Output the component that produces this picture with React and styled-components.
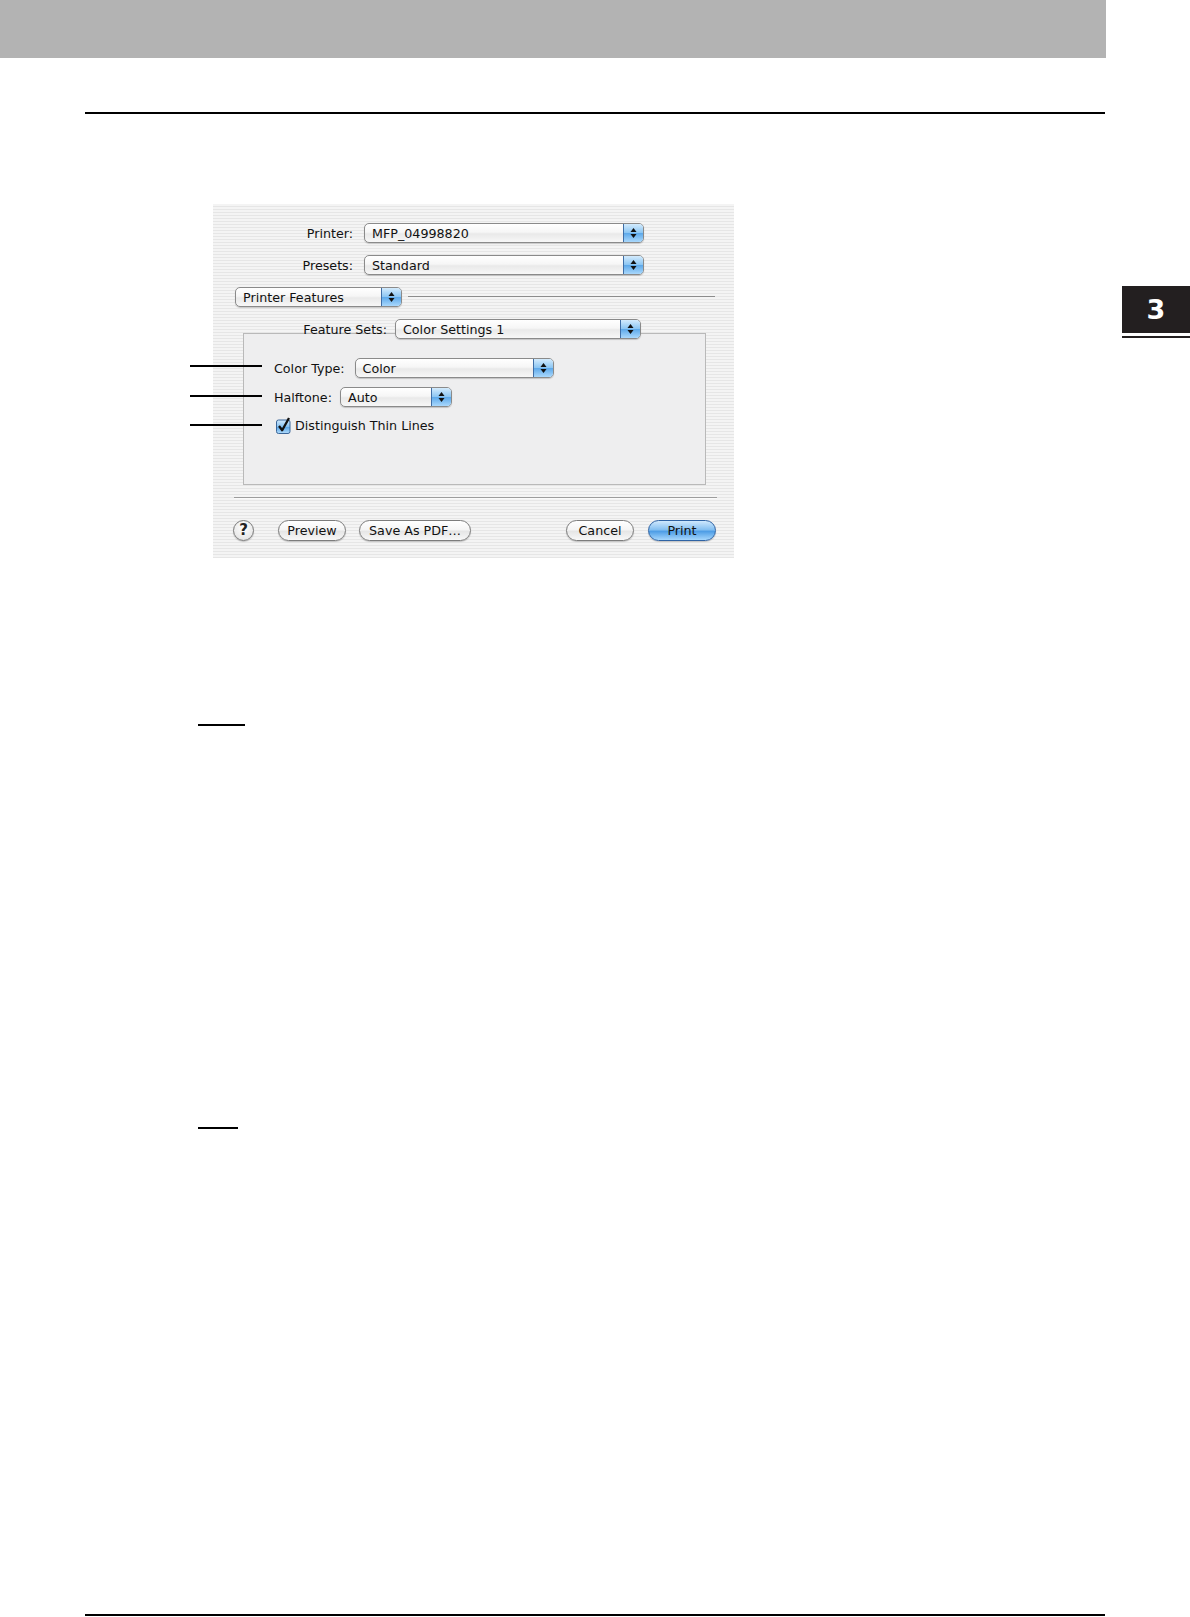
import React from "react";
import styled, { createGlobalStyle, css } from "styled-components";

const GlobalStyle = createGlobalStyle`
  html, body {
    margin: 0;
    padding: 0;
    background: #ffffff;
  }
  body {
    font-family: "DejaVu Sans", "Liberation Sans", sans-serif;
    color: #000;
  }
`;

const Page = styled.div`
  position: relative;
  width: 1190px;
  height: 1617px;
  overflow: hidden;
`;

const HeaderBand = styled.div`
  width: 1106px;
  height: 58px;
  background: #b3b3b3;
`;

const Body = styled.div`
  display: flex;
  align-items: flex-start;
`;

const Main = styled.div`
  display: flex;
  flex-direction: column;
  margin-left: 85px;
  width: 1020px;
`;

const Rule = styled.div`
  height: 2px;
  background: #000;
  margin-top: ${(p) => p.$top}px;
`;

const NoteMark = styled.div`
  width: ${(p) => p.$w}px;
  height: 2px;
  background: #000;
  margin-left: 113px;
  margin-top: ${(p) => p.$top}px;
`;

const Side = styled.div`
  display: flex;
  flex-direction: column;
  margin-left: 17px;
  width: 68px;
  margin-top: 228px;
`;

const ChapterTab = styled.div`
  height: 47px;
  background: #231f20;
  color: #fff;
  display: flex;
  align-items: center;
  justify-content: center;
  font-family: "DejaVu Sans", sans-serif;
  font-weight: bold;
  font-size: 27px;
  line-height: 1;
`;

const TabRule = styled.div`
  height: 2px;
  margin-top: 3px;
  background: #231f20;
`;

/* ---- dialog screenshot ---- */

const Figure = styled.div`
  position: relative;
  margin-top: 90px;
  margin-left: 128px;
  width: 521px;
`;

const Callout = styled.div`
  position: absolute;
  left: -23px;
  top: ${(p) => p.$top}px;
  width: 72px;
  height: 2px;
  background: #000;
`;

const Dialog = styled.div`
  box-sizing: border-box;
  width: 521px;
  height: 354px;
  padding-top: 19px;
  display: flex;
  flex-direction: column;
  background: repeating-linear-gradient(
    to bottom,
    #f4f4f4 0px,
    #f4f4f4 2px,
    #e6e6e6 2px,
    #e6e6e6 3px
  );
  font-size: 12.7px;
  color: #111;
`;

const FieldRow = styled.div`
  display: flex;
  align-items: center;
  gap: ${(p) => p.$gap || 9}px;
  height: 20px;
  margin-bottom: ${(p) => (p.$mb === undefined ? 12 : p.$mb)}px;
  position: relative;
  z-index: 1;
`;

const Label = styled.span`
  display: inline-block;
  white-space: nowrap;
  padding-top: 1px;
  ${(p) =>
    p.$w &&
    css`
      width: ${p.$w}px;
      text-align: right;
    `}
`;

const PopupBox = styled.div`
  box-sizing: border-box;
  display: flex;
  width: ${(p) => p.$w}px;
  height: 20px;
  border: 1px solid #8a8a8a;
  border-radius: 5px;
  background: linear-gradient(#ffffff, #f6f6f6 45%, #e9e9e9 55%, #f7f7f7);
  box-shadow: 0 1px 1px rgba(0, 0, 0, 0.18);
  overflow: hidden;
  margin-left: ${(p) => p.$ml || 0}px;
`;

const PopupText = styled.span`
  flex: 1;
  padding: 1px 0 0 7px;
  line-height: 17px;
  white-space: nowrap;
`;

const Stepper = styled.span`
  width: 19px;
  display: flex;
  align-items: center;
  justify-content: center;
  border-left: 1px solid #3f6ea6;
  background: linear-gradient(#d3ebfd, #8cc6f3 48%, #5ea9ea 52%, #a9d8fc);
`;

const Arrows = () => (
  <svg width="7" height="12" viewBox="0 0 7 12">
    <path d="M3.5 1 L6.5 5 L0.5 5 Z" fill="#111" />
    <path d="M3.5 11 L6.5 7 L0.5 7 Z" fill="#111" />
  </svg>
);

const Popup = ({ w, ml, children }) => (
  <PopupBox $w={w} $ml={ml}>
    <PopupText>{children}</PopupText>
    <Stepper>
      <Arrows />
    </Stepper>
  </PopupBox>
);

const PaneLine = styled.div`
  width: 307px;
  height: 1px;
  background: #8c8c8c;
  margin-top: -2px;
`;

const GroupBox = styled.div`
  box-sizing: border-box;
  margin-left: 30px;
  width: 463px;
  height: 152px;
  border: 1px solid #b9b9b9;
  background: #eeeeef;
  padding: 24px 0 0 30px;
  display: flex;
  flex-direction: column;
`;

const CheckRow = styled.label`
  display: flex;
  align-items: center;
  gap: 4px;
  height: 17px;
  margin-left: 2px;
`;

const Check = () => (
  <svg width="15" height="17" viewBox="0 0 15 17">
    <defs>
      <linearGradient id="cb" x1="0" y1="0" x2="0" y2="1">
        <stop offset="0" stopColor="#d2eafd" />
        <stop offset="0.5" stopColor="#86c2f2" />
        <stop offset="0.55" stopColor="#5ea8e9" />
        <stop offset="1" stopColor="#b2dcfb" />
      </linearGradient>
    </defs>
    <rect x="0.5" y="3" width="13.5" height="13.5" rx="2" fill="url(#cb)" stroke="#3b6699" />
    <path d="M3 9 L6.2 13.2 L13 1" fill="none" stroke="#111" strokeWidth="2.3" strokeLinejoin="round" />
  </svg>
);

const Separator = styled.div`
  margin: 12px 0 0 21px;
  width: 483px;
  height: 1px;
  background: #9c9c9c;
  border-bottom: 1px solid #fafafa;
`;

const ButtonBar = styled.div`
  display: flex;
  align-items: center;
  margin-top: 21px;
  padding: 0 18px 0 20px;
`;

const HelpButton = styled.button`
  box-sizing: border-box;
  width: 21px;
  height: 21px;
  padding: 0;
  border-radius: 50%;
  border: 1px solid #7a7a7a;
  background: radial-gradient(circle at 50% 35%, #ffffff, #e8e8e8 70%, #d4d4d4);
  box-shadow: 0 1px 1px rgba(0, 0, 0, 0.2);
  font-family: "DejaVu Sans", sans-serif;
  font-weight: bold;
  font-size: 15px;
  line-height: 19px;
  color: #222;
  margin-right: 24px;
`;

const PushButton = styled.button`
  box-sizing: border-box;
  width: ${(p) => p.$w}px;
  height: 21px;
  padding: 1px 0 0;
  margin-right: ${(p) => p.$mr || 0}px;
  border-radius: 11px;
  border: 1px solid #7c7c7c;
  background: linear-gradient(#ffffff, #f5f5f5 45%, #e6e6e6 55%, #f8f8f8);
  box-shadow: 0 1px 1px rgba(0, 0, 0, 0.2);
  font-family: "DejaVu Sans", sans-serif;
  font-size: 12.7px;
  line-height: 18px;
  color: #111;
  ${(p) =>
    p.$primary &&
    css`
      border-color: #2f63a4;
      background: linear-gradient(#cfe8fd, #85c0f1 45%, #4f9ee6 55%, #a6d7fd);
    `}
`;

const Spacer = styled.div`
  flex: 1;
`;

const PrintDialog = () => (
  <Dialog>
    <FieldRow $gap={11}>
      <Label $w={140}>Printer:</Label>
      <Popup w={280}>MFP_04998820</Popup>
    </FieldRow>
    <FieldRow $gap={11}>
      <Label $w={140}>Presets:</Label>
      <Popup w={280}>Standard</Popup>
    </FieldRow>
    <FieldRow $gap={6}>
      <Popup w={167} ml={22}>
        Printer Features
      </Popup>
      <PaneLine />
    </FieldRow>
    <FieldRow $gap={8} $mb={-6}>
      <Label $w={174}>Feature Sets:</Label>
      <Popup w={246}>Color Settings 1</Popup>
    </FieldRow>
    <GroupBox>
      <FieldRow $gap={10} $mb={9}>
        <Label>Color Type:</Label>
        <Popup w={199}>Color</Popup>
      </FieldRow>
      <FieldRow $gap={8} $mb={10}>
        <Label>Halftone:</Label>
        <Popup w={112}>Auto</Popup>
      </FieldRow>
      <CheckRow>
        <Check />
        <span>Distinguish Thin Lines</span>
      </CheckRow>
    </GroupBox>
    <Separator />
    <ButtonBar>
      <HelpButton>?</HelpButton>
      <PushButton $w={68} $mr={13}>
        Preview
      </PushButton>
      <PushButton $w={112}>Save As PDF…</PushButton>
      <Spacer />
      <PushButton $w={68} $mr={14}>
        Cancel
      </PushButton>
      <PushButton $w={68} $primary>
        Print
      </PushButton>
    </ButtonBar>
  </Dialog>
);

const callouts = [161, 191, 220];

export default function App() {
  return (
    <Page>
      <GlobalStyle />
      <HeaderBand />
      <Body>
        <Main>
          <Rule $top={54} />
          <Figure>
            <PrintDialog />
            {callouts.map((t) => (
              <Callout key={t} $top={t} />
            ))}
          </Figure>
          <NoteMark $w={47} $top={166} />
          <NoteMark $w={40} $top={401} />
          <Rule $top={485} />
        </Main>
        <Side>
          <ChapterTab>3</ChapterTab>
          <TabRule />
        </Side>
      </Body>
    </Page>
  );
}
